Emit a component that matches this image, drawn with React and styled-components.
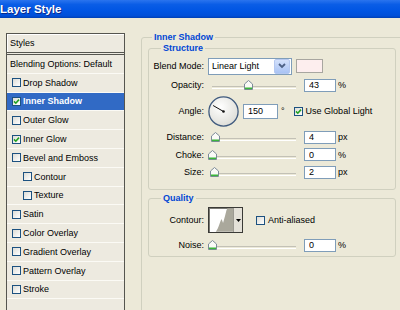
import React from "react";
import styled, { createGlobalStyle } from "styled-components";

const GlobalStyle = createGlobalStyle`
  html, body {
    margin: 0;
    padding: 0;
    background: #ece9d8;
  }
  body {
    font-family: "Liberation Sans", Arial, sans-serif;
    font-size: 9px;
    color: #000;
    overflow: hidden;
  }
`;

const Dialog = styled.div`
  width: 400px;
  height: 310px;
  overflow: hidden;
  background: #ece9d8;
`;

const TitleBar = styled.div`
  height: 18px;
  display: flex;
  align-items: center;
  background: linear-gradient(#2a74ee 0%, #0a5de6 25%, #0055e3 60%, #004fd8 88%, #003fb4 100%);
`;

const Title = styled.h1`
  margin: 0;
  font: bold 11.5px "Liberation Sans", Arial, sans-serif;
  color: #fff;
  text-shadow: 1px 1px 0 #0b2a8a;
`;

const Body = styled.div`
  display: flex;
  align-items: flex-start;
  gap: 16px;
  padding-left: 6px;
`;

/* ---------- left list ---------- */

const StylesPanel = styled.ul`
  list-style: none;
  margin: 15px 0 0;
  padding: 0;
  width: 119px;
  flex: none;
  box-sizing: border-box;
  border: 1px solid #55554f;
  background: #edeae0;
`;

const PanelHeader = styled.li`
  height: 18px;
  display: flex;
  align-items: center;
  padding-left: 3px;
  border-bottom: 3px double #55554f;
  box-shadow: inset 1px 1px 0 #fff;
`;

const StyleRow = styled.li`
  height: 18.8px;
  box-sizing: border-box;
  display: flex;
  align-items: center;
  gap: 2px;
  padding-left: ${(p) => (p.$plain ? 3 : p.$indent ? 16 : 5)}px;
  border-bottom: 1px solid #fbfaf5;
  background: ${(p) => (p.$selected ? "#316ac5" : "transparent")};
  color: ${(p) => (p.$selected ? "#fff" : "#000")};
  font-weight: ${(p) => (p.$selected ? "bold" : "normal")};
`;

const Box = styled.span`
  width: 9px;
  height: 9px;
  flex: none;
  box-sizing: border-box;
  border: 1px solid #1c5180;
  background: linear-gradient(135deg, #dcdcd6, #ffffff);
  display: inline-flex;
  align-items: center;
  justify-content: center;
`;

const CheckBox = ({ checked }) => (
  <Box>
    {checked && (
      <svg width="7" height="7" viewBox="0 0 7 7">
        <path d="M1 3.4 L2.8 5.2 L6 1.6" fill="none" stroke="#21a121" strokeWidth="1.6" />
      </svg>
    )}
  </Box>
);

/* ---------- right options ---------- */

const OuterGroup = styled.fieldset`
  margin: 14px 0 0;
  padding: 0 7px 0 6px;
  width: 263px;
  height: 320px;
  flex: none;
  box-sizing: border-box;
  border: 1px solid #d0d0bf;
  border-radius: 3px;
  min-width: 0;
`;

const Group = styled.fieldset`
  margin: ${(p) => p.$mt || 0}px 0 0;
  padding: ${(p) => p.$pad};
  border: 1px solid #d0d0bf;
  border-radius: 3px;
  min-width: 0;
`;

const Legend = styled.legend`
  margin-left: ${(p) => p.$offset}px;
  padding: 0 2px;
  font-weight: bold;
  font-size: 9px;
  line-height: 11px;
  color: #0046d5;
`;

const Stack = styled.div`
  display: flex;
  flex-direction: column;
  gap: ${(p) => p.$gap}px;
`;

const Row = styled.div`
  display: flex;
  align-items: center;
  height: ${(p) => p.$h}px;
`;

const Label = styled.span`
  width: 51px;
  flex: none;
  margin-right: 4px;
  text-align: right;
`;

const Select = styled.div`
  width: 84px;
  height: 17px;
  box-sizing: border-box;
  border: 1px solid #7f9db9;
  background: #fff;
  display: flex;
  align-items: center;
  justify-content: space-between;
  padding: 0 1px 0 3px;
  margin-right: 4px;
`;

const SelectButton = styled.span`
  width: 14px;
  height: 13px;
  border-radius: 2px;
  border: 1px solid #b5c8f0;
  background: linear-gradient(#d4e1fb, #a9c3f4);
  display: flex;
  align-items: center;
  justify-content: center;
`;

const Swatch = styled.span`
  width: 27px;
  height: 14px;
  box-sizing: border-box;
  border: 1px solid #a8a6a0;
  background: #fdeeee;
`;

const SliderWrap = styled.div`
  position: relative;
  width: 84px;
  height: 10px;
  margin: 0 8px 0 4px;
  flex: none;
`;

const Track = styled.div`
  position: absolute;
  left: 0;
  right: 0;
  bottom: 1px;
  height: 1px;
  border-top: 1px solid #c3c1b6;
  border-bottom: 1px solid #fff;
`;

const Thumb = styled.svg`
  position: absolute;
  top: 0;
  margin-left: -4px;
`;

const Slider = ({ at }) => (
  <SliderWrap>
    <Track />
    <Thumb width="9" height="10" viewBox="0 0 9 10" style={{ left: `${at * 84}px` }}>
      <path d="M4.5 0.5 L8.5 4 L8.5 9.5 L0.5 9.5 L0.5 4 Z" fill="#fafaf7" stroke="#7c8a98" />
      <rect x="1" y="7.5" width="7" height="1.6" fill="#3bb53b" />
    </Thumb>
  </SliderWrap>
);

const Field = styled.input`
  width: ${(p) => p.$w}px;
  height: ${(p) => p.$hh || 13}px;
  box-sizing: border-box;
  border: 1px solid #7f9db9;
  background: #fff;
  padding: 0 0 0 4px;
  margin: 0;
  font: 9px "Liberation Sans", Arial, sans-serif;
  color: #000;
  flex: none;
  outline: none;
`;

const Unit = styled.span`
  margin-left: ${(p) => p.$ml || 2}px;
`;

const CheckLabel = styled.span`
  display: flex;
  align-items: center;
  gap: 3px;
  margin-left: ${(p) => p.$ml}px;
`;

const Dial = () => {
  const a = (150 * Math.PI) / 180;
  const x = 15.5 + 12 * Math.cos(a);
  const y = 15.5 - 12 * Math.sin(a);
  return (
    <svg width="31" height="31" viewBox="0 0 31 31" style={{ marginRight: 4, flex: "none" }}>
      <defs>
        <radialGradient id="dialFill" cx="0.4" cy="0.35" r="0.7">
          <stop offset="0" stopColor="#ffffff" />
          <stop offset="1" stopColor="#dcdcd6" />
        </radialGradient>
      </defs>
      <circle cx="15.5" cy="15.5" r="14.6" fill="url(#dialFill)" stroke="#3f5a7e" strokeWidth="1.3" />
      <line x1="15.5" y1="15.5" x2={x} y2={y} stroke="#111" strokeWidth="1" />
      <circle cx="15.5" cy="15.5" r="1.3" fill="#111" />
    </svg>
  );
};

const ContourPicker = styled.div`
  width: 35px;
  height: 26px;
  box-sizing: border-box;
  border: 1px solid #3a3a36;
  box-shadow: inset 1px 1px 0 #7a7a74;
  background: #fff;
  display: flex;
  margin-right: 13px;
  flex: none;
`;

const ContourArrow = styled.span`
  width: 8px;
  background: #e4e1d8;
  border-left: 1px solid #9c9a92;
  display: flex;
  align-items: center;
  justify-content: center;
`;

const styleItems = [
  { name: "Drop Shadow" },
  { name: "Inner Shadow", checked: true, selected: true },
  { name: "Outer Glow" },
  { name: "Inner Glow", checked: true },
  { name: "Bevel and Emboss" },
  { name: "Contour", indent: true },
  { name: "Texture", indent: true },
  { name: "Satin" },
  { name: "Color Overlay" },
  { name: "Gradient Overlay" },
  { name: "Pattern Overlay" },
  { name: "Stroke" },
  { name: "" },
];

const sliderRows = [
  { label: "Distance:", value: "4", unit: "px", at: 0.04 },
  { label: "Choke:", value: "0", unit: "%", at: 0 },
  { label: "Size:", value: "2", unit: "px", at: 0.02 },
];

export default function App() {
  return (
    <Dialog>
      <GlobalStyle />
      <TitleBar>
        <Title>Layer Style</Title>
      </TitleBar>
      <Body>
        <StylesPanel>
          <PanelHeader>Styles</PanelHeader>
          <StyleRow $plain>Blending Options: Default</StyleRow>
          {styleItems.map((s, i) => (
            <StyleRow key={i} $selected={s.selected} $indent={s.indent}>
              {s.name && <CheckBox checked={s.checked} />}
              {s.name}
            </StyleRow>
          ))}
        </StylesPanel>

        <OuterGroup>
          <Legend $offset={4}>Inner Shadow</Legend>
          <Group $pad="2.5px 4px 8.5px">
            <Legend $offset={8}>Structure</Legend>
            <Stack $gap={1.5}>
              <Row $h={19}>
                <Label>Blend Mode:</Label>
                <Select>
                  Linear Light
                  <SelectButton>
                    <svg width="8" height="6" viewBox="0 0 8 6">
                      <path d="M1 1 L4 4 L7 1" fill="none" stroke="#4d6185" strokeWidth="1.8" />
                    </svg>
                  </SelectButton>
                </Select>
                <Swatch />
              </Row>
              <Row $h={16}>
                <Label>Opacity:</Label>
                <Slider at={0.43} />
                <Field $w={32} defaultValue="43" readOnly />
                <Unit>%</Unit>
              </Row>
              <Row $h={33}>
                <Label>Angle:</Label>
                <Dial />
                <Field $w={35} $hh={15} defaultValue="150" readOnly />
                <Unit $ml={3}>°</Unit>
                <CheckLabel $ml={9}>
                  <CheckBox checked />
                  Use Global Light
                </CheckLabel>
              </Row>
              {sliderRows.map((r) => (
                <Row key={r.label} $h={16}>
                  <Label>{r.label}</Label>
                  <Slider at={r.at} />
                  <Field $w={32} defaultValue={r.value} readOnly />
                  <Unit>{r.unit}</Unit>
                </Row>
              ))}
            </Stack>
          </Group>

          <Group $mt={3} $pad="3.5px 4px 3px">
            <Legend $offset={8}>Quality</Legend>
            <Stack $gap={4}>
              <Row $h={26}>
                <Label>Contour:</Label>
                <ContourPicker>
                  <svg width="25" height="24" viewBox="0 0 25 24">
                    <path
                      d="M7 24 C10 21 11 14 13 11 L14.5 15 L16.5 8 L18 2 L19 0 L25 0 L25 24 Z"
                      fill="#aaa89c"
                    />
                  </svg>
                  <ContourArrow>
                    <svg width="5" height="3" viewBox="0 0 5 3">
                      <path d="M0 0 L5 0 L2.5 3 Z" fill="#000" />
                    </svg>
                  </ContourArrow>
                </ContourPicker>
                <CheckLabel $ml={0}>
                  <CheckBox />
                  Anti-aliased
                </CheckLabel>
              </Row>
              <Row $h={16}>
                <Label>Noise:</Label>
                <Slider at={0} />
                <Field $w={32} defaultValue="0" readOnly />
                <Unit>%</Unit>
              </Row>
            </Stack>
          </Group>
        </OuterGroup>
      </Body>
    </Dialog>
  );
}
